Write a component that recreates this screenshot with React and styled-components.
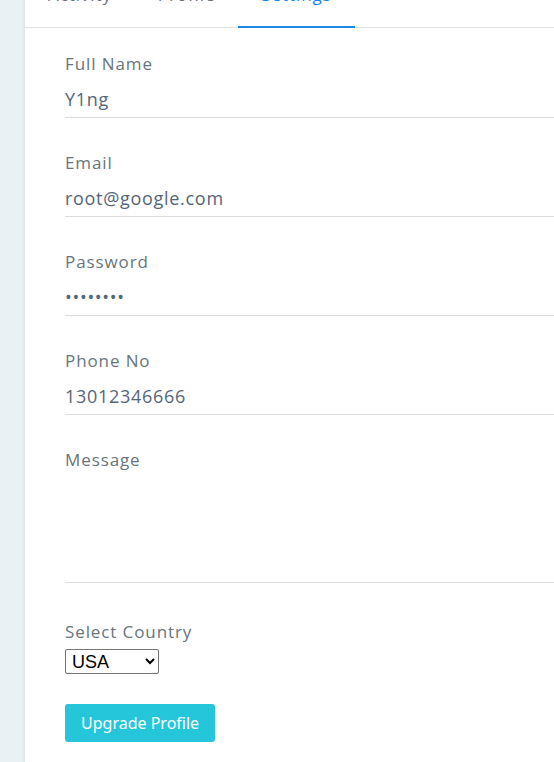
import React from 'react'
import styled, { createGlobalStyle } from 'styled-components'

const GlobalStyle = createGlobalStyle`
  html, body {
    margin: 0;
    padding: 0;
    overflow: hidden;
    background: #eaf1f5;
  }
  * { box-sizing: border-box; }
`

export default function App() {
    return (
        <Page>
            <GlobalStyle />
            <Card>
                <Tabs>
                    <Tab>Activity</Tab>
                    <Tab>Profile</Tab>
                    <Tab active>Settings</Tab>
                </Tabs>
                <Body>
                    <Group>
                        <Label>Full Name</Label>
                        <Input type="text" defaultValue="Y1ng" />
                    </Group>
                    <Group>
                        <Label>Email</Label>
                        <Input type="email" defaultValue="root@google.com" />
                    </Group>
                    <Group>
                        <Label>Password</Label>
                        <Input type="password" defaultValue="password" />
                    </Group>
                    <Group>
                        <Label>Phone No</Label>
                        <Input type="text" defaultValue="13012346666" />
                    </Group>
                    <Group gap="37px">
                        <Label>Message</Label>
                        <TextArea rows="5" />
                    </Group>
                    <Group gap="30px">
                        <Label tight>Select Country</Label>
                        <Select defaultValue="USA">
                            <option>USA</option>
                            <option>London</option>
                            <option>India</option>
                        </Select>
                    </Group>
                    <Button>Upgrade Profile</Button>
                </Body>
            </Card>
        </Page>
    )
}

const Page = styled.div`
    display: flex;
    padding-left: 25px;
    min-height: 762px;
`
const Card = styled.div`
    width: 760px;
    flex-shrink: 0;
    background: #fff;
    box-shadow: -1px 0 3px rgba(0, 0, 0, 0.08);
    font-family: "Open Sans", "Noto Sans", sans-serif;
`
const Tabs = styled.div`
    display: flex;
    margin-top: -27px;
    border-bottom: 1px solid #dee2e6;
`
const Tab = styled.div`
    padding: 10px 23px 19px;
    font-size: 17px;
    line-height: 24px;
    letter-spacing: 0.9px;
    color: ${p => (p.active ? '#1e88e5' : '#67757c')};
    border-bottom: 2px solid ${p => (p.active ? '#1e88e5' : 'transparent')};
    margin-bottom: -1px;
`
const Body = styled.div`
    padding: 24px 40px 20px;
`
const Group = styled.div`
    margin-bottom: ${p => p.gap || '33px'};
`
const Label = styled.label`
    display: block;
    font-size: 17px;
    line-height: 24px;
    letter-spacing: 0.9px;
    color: #67757c;
    margin-bottom: ${p => (p.tight ? '5px' : '4px')};
`
const Input = styled.input`
    display: block;
    width: 100%;
    height: 38px;
    padding: 7px 0 7px;
    border: none;
    border-bottom: 1px solid #dcdcdc;
    outline: none;
    font-family: inherit;
    font-size: 18px;
    letter-spacing: 0.7px;
    color: #54667a;
    background: transparent;
`
const TextArea = styled.textarea`
    display: block;
    width: 100%;
    height: 107px;
    padding: 6px 0;
    border: none;
    border-bottom: 1px solid #dcdcdc;
    outline: none;
    resize: none;
    font-family: inherit;
    font-size: 18px;
`
const Select = styled.select`
    display: block;
    width: 94px;
    height: 25px;
    padding: 0 2px;
    font-family: "Liberation Sans", sans-serif;
    font-size: 18px;
    color: #000;
    background: #fff;
    border: 1px solid #767676;
    border-radius: 2px;
`
const Button = styled.button`
    display: block;
    padding: 7px 16px;
    border: none;
    border-radius: 3px;
    background: #26c6da;
    color: #fff;
    font-family: "Noto Sans", sans-serif;
    font-size: 16px;
    line-height: 24px;
`
